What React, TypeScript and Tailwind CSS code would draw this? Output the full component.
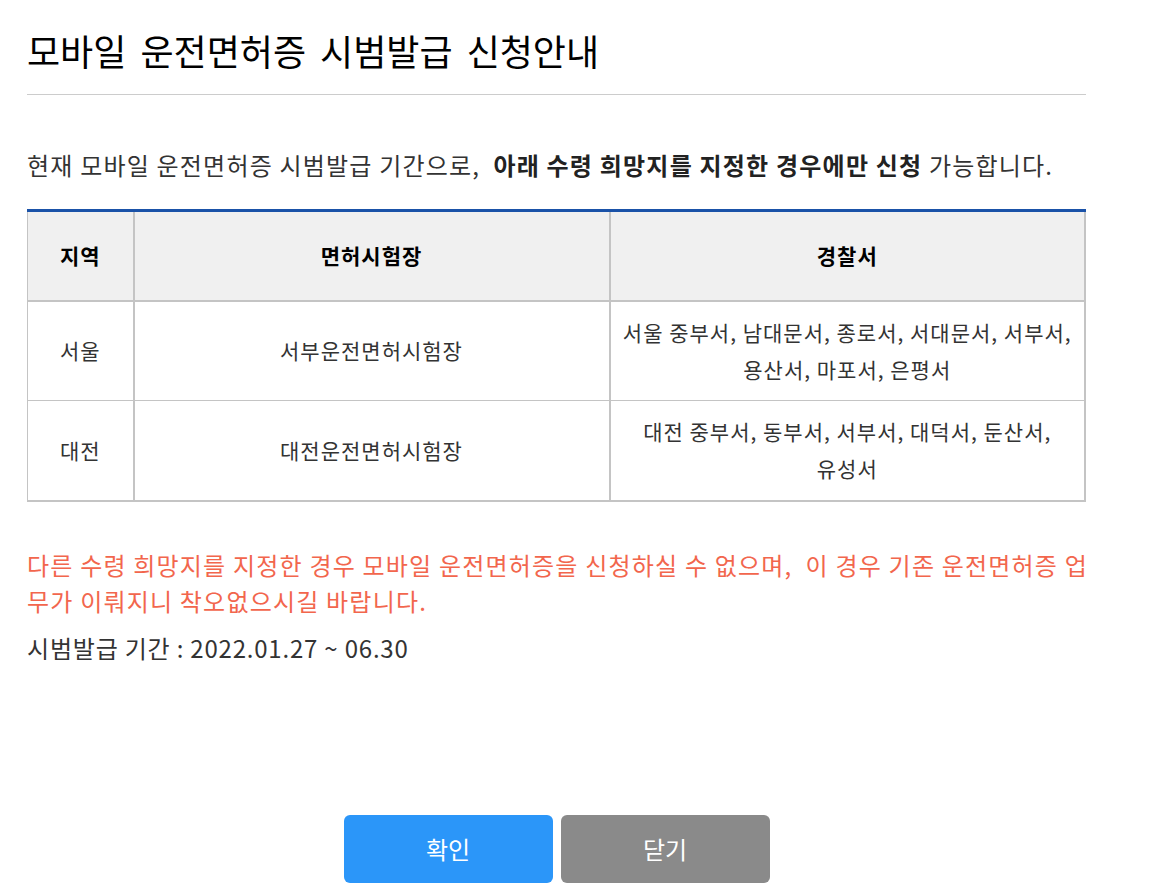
import React from 'react';

const rows = [
  { area: '서울', site: '서부운전면허시험장', police: ['서울 중부서, 남대문서, 종로서, 서대문서, 서부서,', '용산서, 마포서, 은평서'] },
  { area: '대전', site: '대전운전면허시험장', police: ['대전 중부서, 동부서, 서부서, 대덕서, 둔산서,', '유성서'] },
];

export default function App() {
  return (
    <div className="w-[1150px] h-[896px] bg-white font-['Noto_Sans_CJK_KR',sans-serif] text-[#333]">
      <div className="w-[1059px] ml-[27px] flex flex-col">
        {/* Title */}
        <h1 className="pt-[22px] pb-[16px] text-[36px] leading-[56px] [word-spacing:6px] text-black border-b border-[#cccccc]">
          모바일 운전면허증 시범발급 신청안내
        </h1>

        <p className="mt-[50px] text-[24px] leading-[40px] tracking-[1.2px] text-[#333] whitespace-nowrap">
          현재 모바일 운전면허증 시범발급 기간으로,&nbsp;{' '}
          <b className="font-bold text-[#222]">아래 수령 희망지를 지정한 경우에만 신청</b> 가능합니다.
        </p>

        {/* Table */}
        <table className="mt-[24px] w-full border-collapse border-t-[3px] border-t-[#1a52a8] text-center">
          <thead>
            <tr className="h-[90px] bg-[#f0f0f0] text-[21px] font-bold text-black tracking-[1px]">
              <th className="w-[106px] border-l border-[#c4c4c4] border-b-2 border-r-2">지역</th>
              <th className="w-[476px] border-b-2 border-r-2 border-[#c4c4c4]">면허시험장</th>
              <th className="border-b-2 border-r-2 border-[#c4c4c4]">경찰서</th>
            </tr>
          </thead>
          <tbody className="text-[21px] text-[#333] tracking-[1px]">
            {rows.map((r, i) => (
              <tr key={r.area} className="h-[100px]">
                <td className={`border-l border-r-2 border-[#c4c4c4] ${i === 0 ? 'border-b' : 'border-b-2'}`}>{r.area}</td>
                <td className={`border-r-2 border-[#c4c4c4] ${i === 0 ? 'border-b' : 'border-b-2'}`}>{r.site}</td>
                <td className={`border-r-2 border-[#c4c4c4] leading-[37px] ${i === 0 ? 'border-b' : 'border-b-2'}`}>
                  {r.police.map((l) => (
                    <div key={l} className="whitespace-nowrap">{l}</div>
                  ))}
                </td>
              </tr>
            ))}
          </tbody>
        </table>

        <p className="mt-[45px] text-[24px] leading-[36px] tracking-[1.2px] text-[#f2664d]">
          <span className="whitespace-nowrap">다른 수령 희망지를 지정한 경우 모바일 운전면허증을 신청하실 수 없으며,&nbsp; 이 경우 기존 운전면허증 업</span>
          <br />
          무가 이뤄지니 착오없으시길 바랍니다.
        </p>
        <p className="mt-[11px] text-[24px] leading-[36px] tracking-[0.8px] text-[#333]">
          시범발급 기간 : 2022.01.27 ~ 06.30
        </p>

        {/* Buttons */}
        <div className="mt-[149px] flex justify-center gap-[8px]">
          <button className="w-[209px] h-[68px] rounded-[6px] bg-[#2b96f9] text-white text-[24px]">확인</button>
          <button className="w-[209px] h-[68px] rounded-[6px] bg-[#8a8a8a] text-white text-[24px]">닫기</button>
        </div>
      </div>
    </div>
  );
}
